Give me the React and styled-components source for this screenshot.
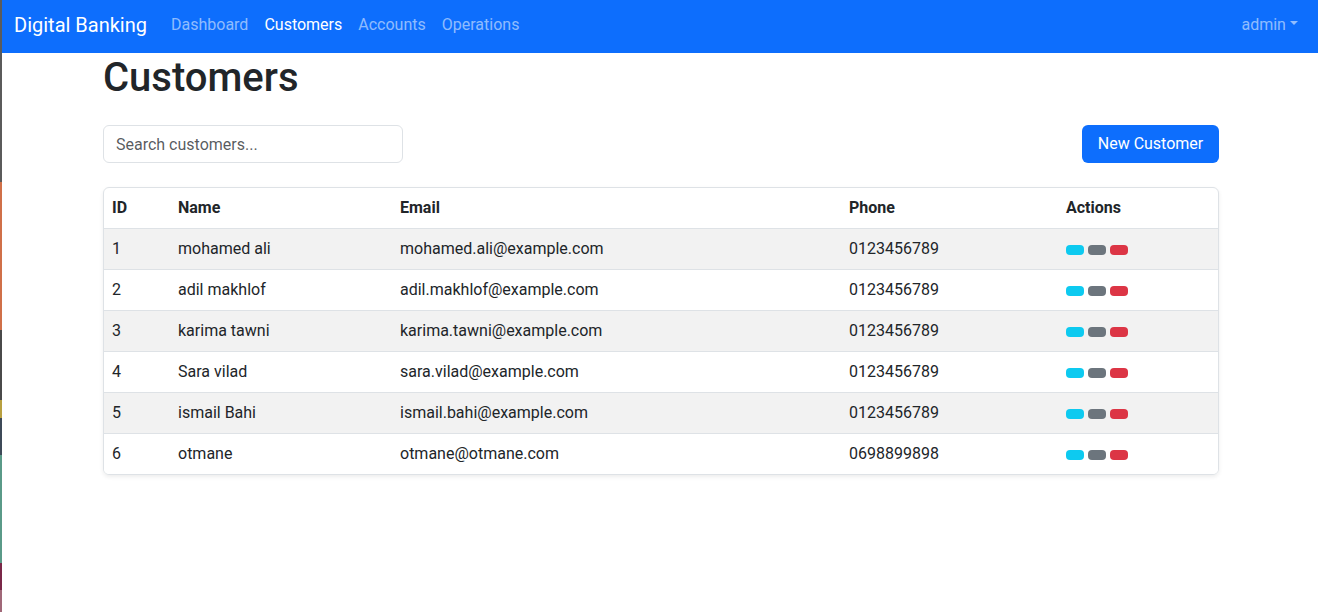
import React from 'react';
import styled, { createGlobalStyle } from 'styled-components';

const Global = createGlobalStyle`
  html, body { margin: 0; padding: 0; background: #fff; }
  body {
    font-family: Roboto, "Liberation Sans", sans-serif;
    color: #212529;
    font-size: 16px;
    line-height: 1.5;
  }
  * { box-sizing: border-box; }
`;

const Shell = styled.div`
  display: flex;
  min-height: 100vh;
`;

const EdgeStrip = styled.div`
  flex: 0 0 2px;
  background: linear-gradient(
    to bottom,
    #5b5b5b 0px, #5b5b5b 182px,
    #d07048 182px, #d07048 330px,
    #4a4a4a 330px, #4a4a4a 400px,
    #b8a040 400px, #b8a040 418px,
    #3e4a58 418px, #3e4a58 455px,
    #5a9a88 455px, #5a9a88 563px,
    #7a2848 563px, #7a2848 590px,
    #a06878 590px, #a06878 612px
  );
`;

const Page = styled.div`
  flex: 1;
  min-width: 0;
`;

const Navbar = styled.nav`
  height: 53px;
  background: #0d6efd;
  display: flex;
  align-items: center;
  padding: 0 12px 4px;
`;

const Brand = styled.a`
  font-size: 20px;
  line-height: 30px;
  color: #fff;
  margin-right: 16px;
  text-decoration: none;
`;

const NavList = styled.div`
  display: flex;
  flex: 1;
`;

const NavLink = styled.a`
  padding: 8px;
  line-height: 24px;
  color: ${(p) => (p.$active ? '#fff' : 'rgba(255,255,255,0.55)')};
  text-decoration: none;
`;

const UserMenu = styled(NavLink)`
  &::after {
    content: '';
    display: inline-block;
    margin-left: 0.255em;
    vertical-align: 0.255em;
    border-top: 0.3em solid;
    border-right: 0.3em solid transparent;
    border-left: 0.3em solid transparent;
  }
`;

const Main = styled.main`
  padding-left: 2px;
`;

const Container = styled.div`
  max-width: 1140px;
  margin: 0 auto;
  padding: 0 12px;
`;

const Title = styled.h1`
  margin: 0;
  padding-top: 1px;
  font-size: 40px;
  font-weight: 500;
  line-height: 1.2;
`;

const Toolbar = styled.div`
  display: flex;
  justify-content: space-between;
  align-items: center;
  margin: 23px 0 24px;
`;

const SearchInput = styled.input`
  width: 300px;
  height: 38px;
  padding: 6px 12px;
  border: 1px solid #dee2e6;
  border-radius: 6px;
  font: inherit;
  color: #212529;
  &::placeholder { color: rgba(33, 37, 41, 0.75); }
`;

const PrimaryButton = styled.button`
  min-width: 137px;
  height: 38px;
  padding: 6px 12px;
  background: #0d6efd;
  color: #fff;
  border: none;
  border-radius: 6px;
  font: inherit;
`;

const TableWrap = styled.div`
  border: 1px solid #dee2e6;
  border-radius: 6px;
  box-shadow: 0 2px 4px rgba(0, 0, 0, 0.075);
  overflow: hidden;
`;

const Table = styled.table`
  width: 100%;
  border-collapse: collapse;
  table-layout: fixed;
`;

const Th = styled.th`
  width: ${(p) => (p.$w ? `${p.$w}px` : 'auto')};
  text-align: left;
  padding: 8px;
  font-weight: 700;
  line-height: 24px;
`;

const Tr = styled.tr`
  background: ${(p) => (p.$striped ? '#f2f2f2' : '#fff')};
`;

const Td = styled.td`
  padding: 8px;
  line-height: 24px;
  border-top: 1px solid #dee2e6;
`;

const Actions = styled.div`
  display: flex;
  gap: 4px;
  padding-top: 2px;
`;

const Pill = styled.span`
  width: 18px;
  height: 10px;
  border-radius: 4px;
  background: ${(p) => p.$color};
`;

const customers = [
  { id: 1, name: 'mohamed ali', email: 'mohamed.ali@example.com', phone: '0123456789' },
  { id: 2, name: 'adil makhlof', email: 'adil.makhlof@example.com', phone: '0123456789' },
  { id: 3, name: 'karima tawni', email: 'karima.tawni@example.com', phone: '0123456789' },
  { id: 4, name: 'Sara vilad', email: 'sara.vilad@example.com', phone: '0123456789' },
  { id: 5, name: 'ismail Bahi', email: 'ismail.bahi@example.com', phone: '0123456789' },
  { id: 6, name: 'otmane', email: 'otmane@otmane.com', phone: '0698899898' },
];

export default function App() {
  return (
    <>
      <Global />
      <Shell>
        <EdgeStrip />
        <Page>
          <Navbar>
            <Brand href="#">Digital Banking</Brand>
            <NavList>
              <NavLink href="#">Dashboard</NavLink>
              <NavLink href="#" $active>Customers</NavLink>
              <NavLink href="#">Accounts</NavLink>
              <NavLink href="#">Operations</NavLink>
            </NavList>
            <UserMenu href="#">admin</UserMenu>
          </Navbar>
          <Main>
            <Container>
              <Title>Customers</Title>
              <Toolbar>
                <SearchInput placeholder="Search customers..." />
                <PrimaryButton>New Customer</PrimaryButton>
              </Toolbar>
              <TableWrap>
                <Table>
                  <thead>
                    <tr>
                      <Th $w={66}>ID</Th>
                      <Th $w={222}>Name</Th>
                      <Th $w={449}>Email</Th>
                      <Th $w={217}>Phone</Th>
                      <Th>Actions</Th>
                    </tr>
                  </thead>
                  <tbody>
                    {customers.map((c, i) => (
                      <Tr key={c.id} $striped={i % 2 === 0}>
                        <Td>{c.id}</Td>
                        <Td>{c.name}</Td>
                        <Td>{c.email}</Td>
                        <Td>{c.phone}</Td>
                        <Td>
                          <Actions>
                            <Pill $color="#0dcaf0" />
                            <Pill $color="#6c757d" />
                            <Pill $color="#dc3545" />
                          </Actions>
                        </Td>
                      </Tr>
                    ))}
                  </tbody>
                </Table>
              </TableWrap>
            </Container>
          </Main>
        </Page>
      </Shell>
    </>
  );
}
